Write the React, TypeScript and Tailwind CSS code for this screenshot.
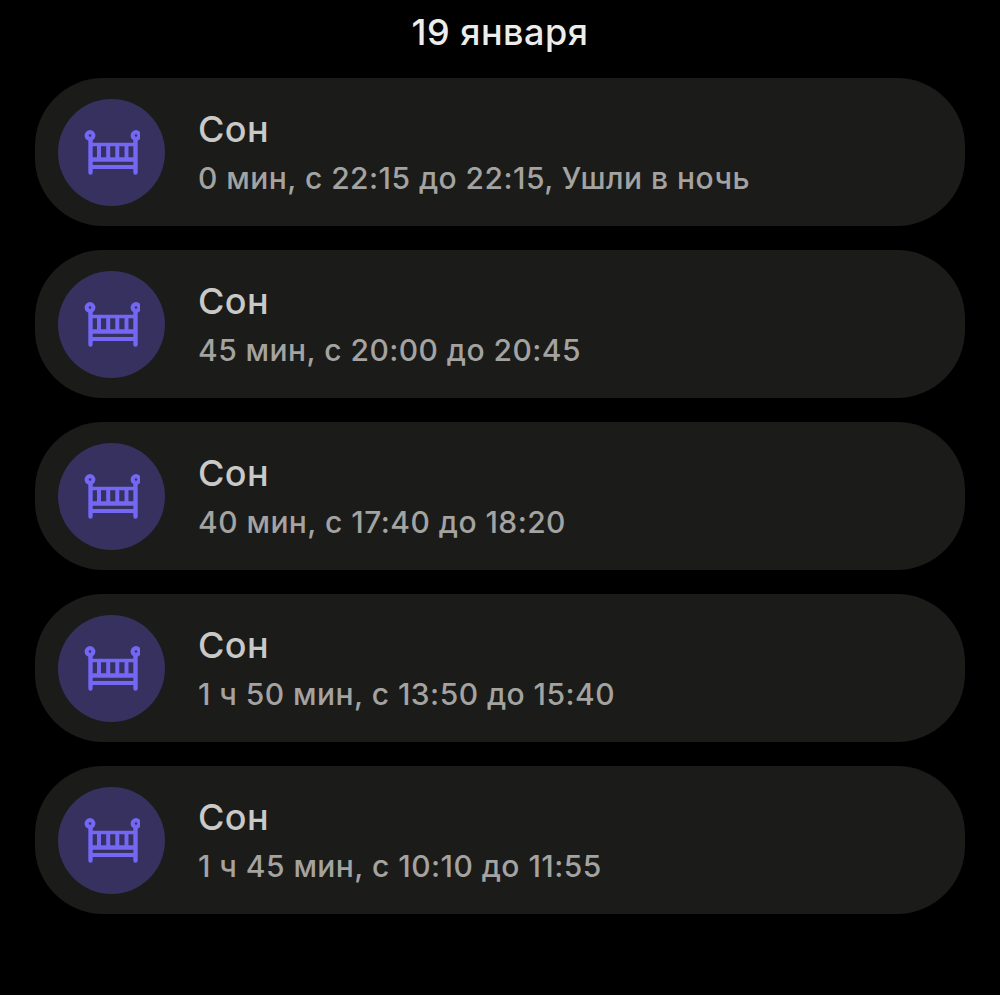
const items = [
  '0 мин, с 22:15 до 22:15, Ушли в ночь',
  '45 мин, с 20:00 до 20:45',
  '40 мин, с 17:40 до 18:20',
  '1 ч 50 мин, с 13:50 до 15:40',
  '1 ч 45 мин, с 10:10 до 11:55',
];

const CribIcon = () => (
  <svg width="56" height="46" viewBox="0 0 56 46" fill="none" className="shrink-0">
    {/* knobs */}
    <circle cx="6" cy="6.5" r="5.4" fill="#7367f3" />
    <circle cx="52" cy="6.5" r="5.4" fill="#7367f3" />
    <circle cx="6" cy="6.5" r="1.2" fill="#37315f" />
    <circle cx="52" cy="6.5" r="1.2" fill="#37315f" />
    {/* posts */}
    <path d="M6.5 11V43.5M51.5 11V43.5" stroke="#7367f3" strokeWidth="4.4" strokeLinecap="round" />
    {/* rails */}
    <path d="M6 15.5H52" stroke="#7367f3" strokeWidth="3.4" />
    <path d="M6 30.5H52" stroke="#7367f3" strokeWidth="4.6" />
    <path d="M6 38H52" stroke="#7367f3" strokeWidth="3.8" />
    {/* slats */}
    <path d="M15 15V30M24.2 15V30M33.3 15V30M42.5 15V30" stroke="#7367f3" strokeWidth="4" />
  </svg>
);

const SleepCard = ({ detail }: { detail: string }) => (
  <div className="flex h-[148px] items-center rounded-[68px] bg-[#1b1b1a] pl-[23px]">
    <div className="flex h-[107px] w-[107px] shrink-0 items-center justify-center rounded-full bg-[#37315f]">
      <CribIcon />
    </div>
    <div className="ml-[33px] flex flex-col pb-[3px]">
      <div className="text-[36px] leading-[46px] font-medium tracking-[0.4px] text-[#c9c9c7]">Сон</div>
      <div className="mt-[9px] text-[30px] leading-[34px] font-medium tracking-[0.45px] text-[#a3a3a1]">{detail}</div>
    </div>
  </div>
);

export default function App() {
  return (
    <div className="min-h-[995px] bg-black px-[35px] font-['Inter',sans-serif]">
      <h1 className="h-[78px] pt-[10px] text-center text-[36px] leading-[44px] font-medium tracking-[0.5px] text-[#ececea]">19 января</h1>
      <div className="flex flex-col gap-[24px]">
        {items.map((detail) => (
          <SleepCard key={detail} detail={detail} />
        ))}
      </div>
    </div>
  );
}
